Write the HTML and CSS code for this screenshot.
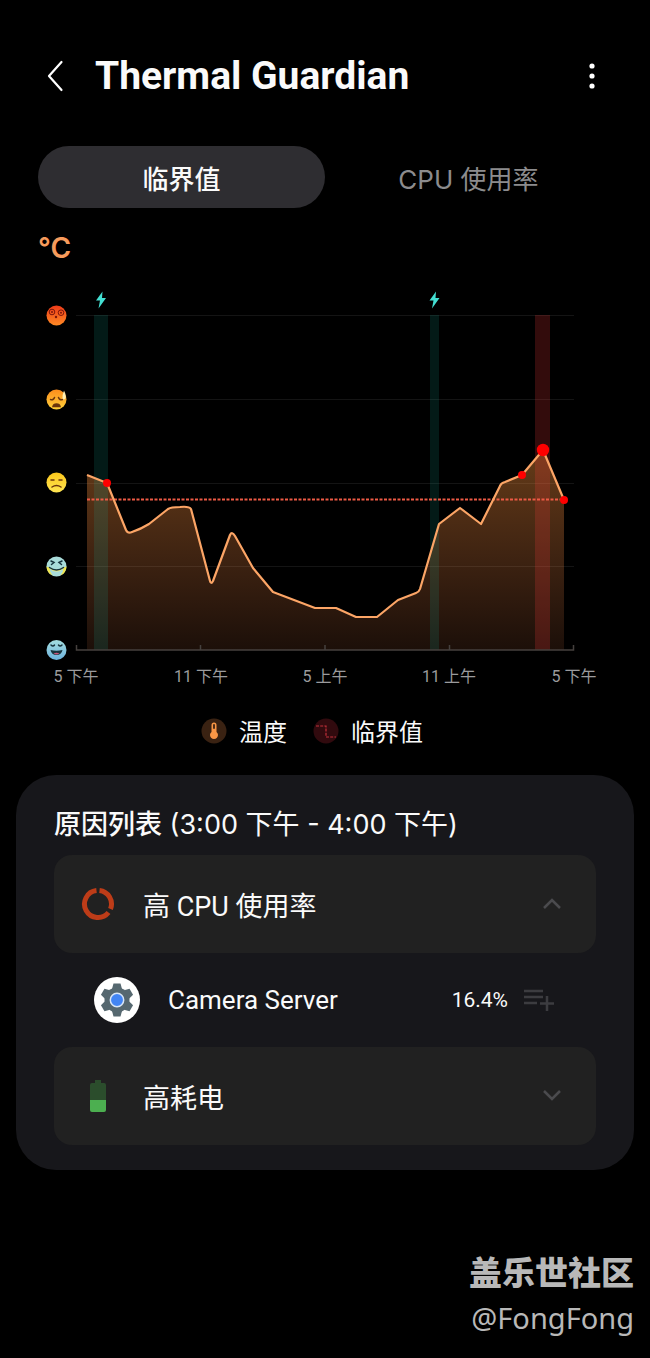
FILE: index.html
```html
<!DOCTYPE html>
<html lang="zh-CN">
<head>
  <meta charset="UTF-8">
  <meta name="viewport" content="width=device-width, initial-scale=1.0">
  <title>Thermal Guardian</title>
  <link rel="stylesheet" href="styles.css">
</head>
<body>
  <header class="app-bar">
    <button class="icon-button" type="button" aria-label="返回">
      <svg width="34" height="40" viewBox="0 0 34 40" fill="none" stroke="#fff" stroke-width="2.2" stroke-linecap="round" stroke-linejoin="round"><path d="M24.500 6 12 20l12.500 14"/></svg>
    </button>
    <h1>Thermal Guardian</h1>
    <button class="icon-button" type="button" aria-label="更多">
      <svg width="34" height="40" viewBox="0 0 34 40" fill="#fff"><circle cx="17" cy="10" r="2.6"/><circle cx="17" cy="20" r="2.6"/><circle cx="17" cy="30" r="2.6"/></svg>
    </button>
  </header>

  <main>
    <div class="tabs" role="tablist">
      <button class="tab active" type="button" role="tab" aria-selected="true">临界值</button>
      <button class="tab" type="button" role="tab" aria-selected="false">CPU 使用率</button>
    </div>

    <section class="chart">
      <div class="unit">°C</div>
      <svg class="plot" viewBox="0 0 574 412" role="img" aria-label="温度">
        <defs>
          <linearGradient id="area" x1="0" y1="170" x2="0" y2="370" gradientUnits="userSpaceOnUse">
            <stop offset="0" stop-color="#ff963c" stop-opacity=".4"/>
            <stop offset="1" stop-color="#ff8a50" stop-opacity=".11"/>
          </linearGradient>
          <linearGradient id="hot" x1="0" y1="0" x2="0" y2="1"><stop offset="0" stop-color="#ee3b19"/><stop offset="1" stop-color="#ff8a24"/></linearGradient>
          <linearGradient id="warm" x1="0" y1="0" x2="0" y2="1"><stop offset="0" stop-color="#fb8c1c"/><stop offset="1" stop-color="#ffd13a"/></linearGradient>
          <linearGradient id="mild" x1="0" y1="0" x2="0" y2="1"><stop offset="0" stop-color="#fbc61b"/><stop offset="1" stop-color="#ffe552"/></linearGradient>
          <linearGradient id="cool" x1="0" y1="0" x2="0" y2="1"><stop offset="0" stop-color="#a4dde0"/><stop offset="1" stop-color="#6cb2dc"/></linearGradient>
        </defs>

        <!-- grid -->
        <path class="grid" d="M38 35.500H536M38 119.500H536M38 203.500H536M38 286.500H536"/>

        <!-- temperature -->
        <path fill="url(#area)" d="M49 195 69 203 88 250Q90 254 94 252 103 249 111 244L130 229Q133 227 142 227 151 226 153 229L172 301Q173 305 175 301L192 255Q194 251 197 256L215 288 235 312 256 320 277 328H298L318 337H339L360 320 378 313Q381 312 382 309L401 244 422 228 443 244 462 206Q463 203 467 202L484 195 505 170 526 220V370H49Z"/>

        <!-- charging and over-threshold periods -->
        <path class="charging" d="M56 35h14v335H56zM392 35h9v335h-9z"/>
        <path class="over" d="M497 35h15v335h-15z"/>

        <path class="axis" d="M38.500 365V370H535.500V365M162.500 365V370M287 365V370M411.500 365V370"/>
        <path class="limit" d="M49 219.500H526"/>
        <path class="line" d="M49 195 69 203 88 250Q90 254 94 252 103 249 111 244L130 229Q133 227 142 227 151 226 153 229L172 301Q173 305 175 301L192 255Q194 251 197 256L215 288 235 312 256 320 277 328H298L318 337H339L360 320 378 313Q381 312 382 309L401 244 422 228 443 244 462 206Q463 203 467 202L484 195 505 170 526 220"/>
        <g fill="#f00">
          <circle cx="69" cy="203" r="4"/><circle cx="484" cy="195" r="4"/><circle cx="505" cy="170" r="6.200"/><circle cx="526" cy="220" r="4"/>
        </g>
        <g fill="#43dfd2">
          <path id="bolt" d="M64.500 11.500 58 20.500h4l-1.500 8 7.500-10.500h-4z"/>
          <use href="#bolt" x="333.500"/>
        </g>

        <!-- comfort faces -->
        <g transform="translate(18.500 35.500)">
          <circle r="10" fill="url(#hot)"/>
          <g fill="none" stroke="#7d160c" stroke-width="1"><circle cx="-4.500" cy="-3.500" r="2.800"/><circle cx="4.500" cy="-2.800" r="2.800"/></g>
          <g fill="#7d160c"><circle cx="-4.500" cy="-3.500" r="1"/><circle cx="4.500" cy="-2.800" r="1"/><circle cx="-.5" cy="1.500" r="1.200"/></g>
        </g>
        <g transform="translate(18.500 119.500)">
          <circle r="10" fill="url(#warm)"/>
          <g class="face"><path d="M-6 0Q-3 1-2-2M6 0Q3 1 2-2"/><path d="M-3.500 7Q-3 4.500 0 4.500T3.500 7Z" fill="#6b350c"/></g>
          <path d="M7.500-9Q10-4 9-1 7 1 6-1 5.500-4 7.500-9Z" fill="#fff0b3"/>
        </g>
        <g transform="translate(18.500 202.500)">
          <circle r="10" fill="url(#mild)"/>
          <path class="face" d="M-5.500-2.500h3M2.500-2.500h3M-4.500 4.500Q0 1.500 4.500 4.500"/>
        </g>
        <g transform="translate(18.500 286.500)">
          <circle r="10" fill="#a9dcda"/>
          <path d="M-10 0A10 10 0 0 0-4 9Q-7 5-7 1ZM10 0A10 10 0 0 1 4 9Q7 5 7 1Z" fill="#f0e650"/>
          <path d="M-7 1Q0 5 7 1 5 5 0 5T-7 1Z" fill="#f2ee7d"/>
          <path class="face dark" d="M-5.500-5.500-2.500-4-5-2M5.500-5.500 2.500-4 5-2M-7 1Q0 6 7 1"/>
        </g>
        <g transform="translate(18.500 370)">
          <circle r="10" fill="url(#cool)"/>
          <path class="face dark" d="M-5.500-5Q-3.500-3-2-5M2-5Q3.500-3 5.500-5"/>
          <path d="M-6 0Q0 1.500 6 0 5 5 0 5T-6 0Z" fill="#17333d"/><path d="M-3 3.500Q0 2 3 3.500 0 5.500-3 3.500Z" fill="#c9547a"/>
        </g>

        <g class="hours">
          <text x="38" y="402">5 下午</text>
          <text x="163" y="402">11 下午</text>
          <text x="287" y="402">5 上午</text>
          <text x="411" y="402">11 上午</text>
          <text x="536" y="402">5 下午</text>
        </g>
      </svg>

      <ul class="legend">
        <li>
          <svg width="26" height="26" viewBox="0 0 26 26"><circle cx="13" cy="13" r="12.500" fill="#3a2212"/><path d="M10.500 7a2.500 2.500 0 0 1 5 0v7a4 4 0 1 1-5 0z" fill="#f99645"/><path d="M13 7v3" stroke="#3a2212" stroke-width="1.800" stroke-linecap="round"/></svg>
          <span>温度</span>
        </li>
        <li>
          <svg width="26" height="26" viewBox="0 0 26 26"><circle cx="13" cy="13" r="12.500" fill="#310a0e"/><path d="M3 8h10v11h10" fill="none" stroke="#c2303a" stroke-width="1.200" stroke-dasharray="3 1.200"/></svg>
          <span>临界值</span>
        </li>
      </ul>
    </section>
  </main>

  <section class="causes">
    <h2><strong>原因列表</strong> (3:00 下午 - 4:00 下午)</h2>

    <button class="cause" type="button" aria-expanded="true">
      <svg width="34" height="34" viewBox="0 0 34 34" fill="none" stroke="#bd3c18" stroke-width="5"><path d="M18.500 3.600A13.500 13.500 0 0 1 29.500 22M27.500 25.500A13.500 13.500 0 1 1 15.500 3.600"/></svg>
      <span>高 CPU 使用率</span>
      <svg width="24" height="24" viewBox="0 0 24 24" class="chevron"><path d="m4 16 8-8 8 8"/></svg>
    </button>

    <div class="process">
      <svg width="46" height="46" viewBox="0 0 46 46">
        <circle cx="23" cy="23" r="23" fill="#fff"/>
        <g fill="#566870">
          <circle cx="23" cy="23" r="12.500"/>
          <path id="tooth" d="M18 12 19.500 6.500h7L28 12z"/>
          <use href="#tooth" transform="rotate(60 23 23)"/><use href="#tooth" transform="rotate(120 23 23)"/><use href="#tooth" transform="rotate(180 23 23)"/><use href="#tooth" transform="rotate(240 23 23)"/><use href="#tooth" transform="rotate(300 23 23)"/>
        </g>
        <circle cx="23" cy="23" r="6.700" fill="#4285f4" stroke="#d8e6f8" stroke-width="1.500"/>
      </svg>
      <span class="name">Camera Server</span>
      <span class="usage">16.4%</span>
      <button class="add" type="button" aria-label="添加">
        <svg width="30" height="24" viewBox="0 0 30 24" fill="none" stroke="#3c3c40" stroke-width="2.500"><path d="M0 3h19M0 9h19M0 15h13M23 8v15M16 15.500h14"/></svg>
      </button>
    </div>

    <button class="cause" type="button" aria-expanded="false">
      <svg width="34" height="34" viewBox="0 0 34 34"><path d="M14 1h6v3h3q2 0 2 2v15H9V6q0-2 2-2h3z" fill="#2b4d2c"/><path d="M9 21h16v10q0 2-2 2H11q-2 0-2-2z" fill="#4caf50"/></svg>
      <span>高耗电</span>
      <svg width="24" height="24" viewBox="0 0 24 24" class="chevron"><path d="m4 7 8 8 8-8"/></svg>
    </button>
  </section>

  <footer class="credit">
    <strong>盖乐世社区</strong>
    <span>@FongFong</span>
  </footer>
</body>
</html>
```
FILE: styles.css
```css
* {
  box-sizing: border-box;
}
body {
  margin: 0;
  padding: 44px 16px 20px;
  background: #000;
  color: #fafafa;
  font-family: Roboto, 'Noto Sans CJK SC', sans-serif;
}
button {
  border: none;
  padding: 0;
  background: none;
  color: inherit;
  font: inherit;
  cursor: pointer;
}
svg {
  display: block;
  flex-shrink: 0;
}
h2, .tab, .unit {
  font-family: Inter, 'Noto Sans CJK SC', sans-serif;
}
.app-bar {
  display: flex;
  align-items: center;
  height: 64px;
  padding: 0 25px 0 21px;
}
.app-bar h1 {
  flex: 1;
  margin: 0 0 0 24px;
  font-size: 39px;
  line-height: 48px;
  font-weight: 700;
}
main {
  padding: 38px 22px 0;
}
.tabs {
  display: grid;
  grid-template-columns: 1fr 1fr;
}
.tab {
  height: 62px;
  border-radius: 31px;
  color: #8c8c8e;
  font-size: 26px;
}
.tab.active {
  background: #2e2d31;
  color: #fafafa;
  font-weight: 500;
}
.unit {
  margin-top: 22px;
  color: #f79b5c;
  font-size: 28px;
  font-weight: 600;
  line-height: 36px;
}
.plot {
  width: 100%;
  margin-top: 14px;
}
.grid {
  stroke: #141414;
}
.charging {
  fill: #14b8a6;
  fill-opacity: .14;
}
.over {
  fill: #ff3b3b;
  fill-opacity: .2;
}
.axis {
  fill: none;
  stroke: #45403e;
  stroke-width: 1.5;
}
.limit {
  stroke: #ee5a45;
  stroke-width: 2;
  stroke-dasharray: 3 1.5;
}
.line {
  fill: none;
  stroke: #fca566;
  stroke-width: 2.2;
  stroke-linejoin: round;
}
.face {
  fill: none;
  stroke: #6b350c;
  stroke-width: 1.5;
  stroke-linecap: round;
}
.face.dark {
  stroke: #17333d;
}
.hours {
  fill: #9b9b9d;
  font-size: 16px;
  text-anchor: middle;
}
.legend {
  display: flex;
  justify-content: center;
  gap: 26px;
  margin: 18px 0 0;
  padding: 0 26px 0 0;
  list-style: none;
  font-size: 24px;
  line-height: 36px;
}
.legend li {
  display: flex;
  align-items: center;
  gap: 12px;
}
.legend span {
  padding-top: 5px;
}
.causes {
  margin-top: 24px;
  padding: 30px 38px 25px;
  border-radius: 40px;
  background: #17171b;
}
.causes h2 {
  margin: 0 0 10px;
  font-size: 27px;
  line-height: 40px;
  font-weight: 400;
}
.causes strong {
  font-weight: 500;
}
.cause {
  display: flex;
  align-items: center;
  width: 100%;
  height: 98px;
  padding: 0 32px 0 27px;
  border-radius: 18px;
  background: #212121;
  font-size: 27px;
  text-align: left;
}
.cause span {
  flex: 1;
  margin-left: 28px;
}
.chevron {
  fill: none;
  stroke: #4b4b4e;
  stroke-width: 2.5;
}
.process {
  display: flex;
  align-items: center;
  height: 94px;
  padding: 0 42px 0 40px;
}
.name {
  flex: 1;
  margin-left: 28px;
  font-size: 26px;
}
.usage {
  margin-right: 16px;
  font-size: 21px;
}
.credit {
  display: flex;
  flex-direction: column;
  align-items: flex-end;
  margin-top: 80px;
  color: #b8b8b8;
}
.credit strong {
  font-size: 33px;
  font-weight: 900;
  line-height: 48px;
}
.credit span {
  font-family: 'Noto Sans', sans-serif;
  font-size: 29px;
  line-height: 40px;
}
```
